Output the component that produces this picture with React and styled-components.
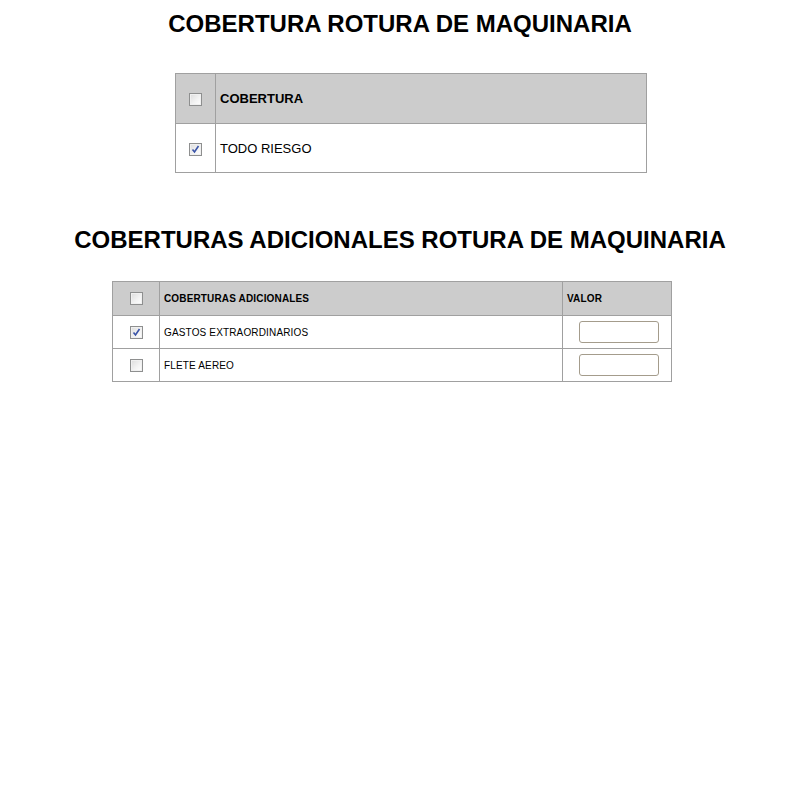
import React from 'react';
import styled, { createGlobalStyle } from 'styled-components';

const GlobalStyle = createGlobalStyle`
  body {
    margin: 0;
    background: #ffffff;
    font-family: 'Liberation Sans', Arial, sans-serif;
    color: #000000;
  }
`;

const Page = styled.div`
  width: 800px;
  padding-top: 10px;
  display: flex;
  flex-direction: column;
  align-items: center;
`;

const Title = styled.h1`
  margin: 0;
  font-size: 24px;
  line-height: 28px;
  font-weight: bold;
  text-align: center;
`;

const Table = styled.table`
  align-self: flex-start;
  border-collapse: collapse;
  width: ${(p) => p.$width}px;
  margin: ${(p) => p.$top}px 0 ${(p) => p.$bottom}px ${(p) => p.$left}px;
  font-size: ${(p) => p.$font}px;
  letter-spacing: ${(p) => p.$spacing || 0}px;

  th,
  td {
    border: 1px solid #a0a0a0;
    padding: 0 4px;
    text-align: left;
  }

  th {
    background: #cccccc;
    font-weight: bold;
  }
`;

const Row = styled.tr`
  height: ${(p) => p.$h}px;
`;

const CheckCell = styled.td`
  && {
    width: ${(p) => p.$w}px;
    padding: 0;
    text-align: center;
  }
`;

const CheckHead = styled(CheckCell).attrs({ as: 'th' })``;

const ValueCell = styled.td`
  && {
    width: ${(p) => p.$w}px;
    text-align: center;
    padding: 0 0 0 4px;
  }
`;

const ValueHead = styled.th`
  && {
    width: ${(p) => p.$w}px;
    padding: 0 4px;
  }
`;

const Box = styled.span`
  display: inline-block;
  vertical-align: middle;
  width: 13px;
  height: 13px;
  box-sizing: border-box;
  border: 1px solid #8e8f8f;
  background: linear-gradient(135deg, #dcdcdc 0%, #f4f4f4 60%, #ffffff 100%);
  box-shadow: inset 0 0 0 1px #f0f0f0;
  position: relative;
`;

const Tick = styled.svg`
  position: absolute;
  left: 1px;
  top: 1px;
`;

const ValueInput = styled.input`
  width: 80px;
  height: 22px;
  box-sizing: border-box;
  border: 1px solid #a49c8c;
  border-radius: 3px;
  background: #ffffff;
  padding: 0 3px;
  vertical-align: middle;
  outline: none;
`;

function Check({ checked }) {
  return (
    <Box>
      {checked && (
        <Tick width="9" height="9" viewBox="0 0 9 9">
          <path d="M1.5 4.5 L3.5 7 L7.5 1" fill="none" stroke="#3a54a8" strokeWidth="1.6" />
        </Tick>
      )}
    </Box>
  );
}

const adicionales = [
  { name: 'GASTOS EXTRAORDINARIOS', checked: true },
  { name: 'FLETE AEREO', checked: false },
];

export default function App() {
  return (
    <Page>
      <GlobalStyle />
      <Title>COBERTURA ROTURA DE MAQUINARIA</Title>
      <Table $width={472} $top={35} $bottom={53} $left={175} $font={13}>
        <thead>
          <Row $h={50}>
            <CheckHead $w={39}>
              <Check />
            </CheckHead>
            <th>COBERTURA</th>
          </Row>
        </thead>
        <tbody>
          <Row $h={49}>
            <CheckCell $w={39}>
              <Check checked />
            </CheckCell>
            <td>TODO RIESGO</td>
          </Row>
        </tbody>
      </Table>

      <Title>COBERTURAS ADICIONALES ROTURA DE MAQUINARIA</Title>
      <Table $width={560} $top={27} $bottom={0} $left={112} $font={10} $spacing={0.15}>
        <thead>
          <Row $h={34}>
            <CheckHead $w={46}>
              <Check />
            </CheckHead>
            <th>COBERTURAS ADICIONALES</th>
            <ValueHead $w={100}>VALOR</ValueHead>
          </Row>
        </thead>
        <tbody>
          {adicionales.map((item) => (
            <Row $h={33} key={item.name}>
              <CheckCell $w={46}>
                <Check checked={item.checked} />
              </CheckCell>
              <td>{item.name}</td>
              <ValueCell $w={104}>
                <ValueInput type="text" />
              </ValueCell>
            </Row>
          ))}
        </tbody>
      </Table>
    </Page>
  );
}
